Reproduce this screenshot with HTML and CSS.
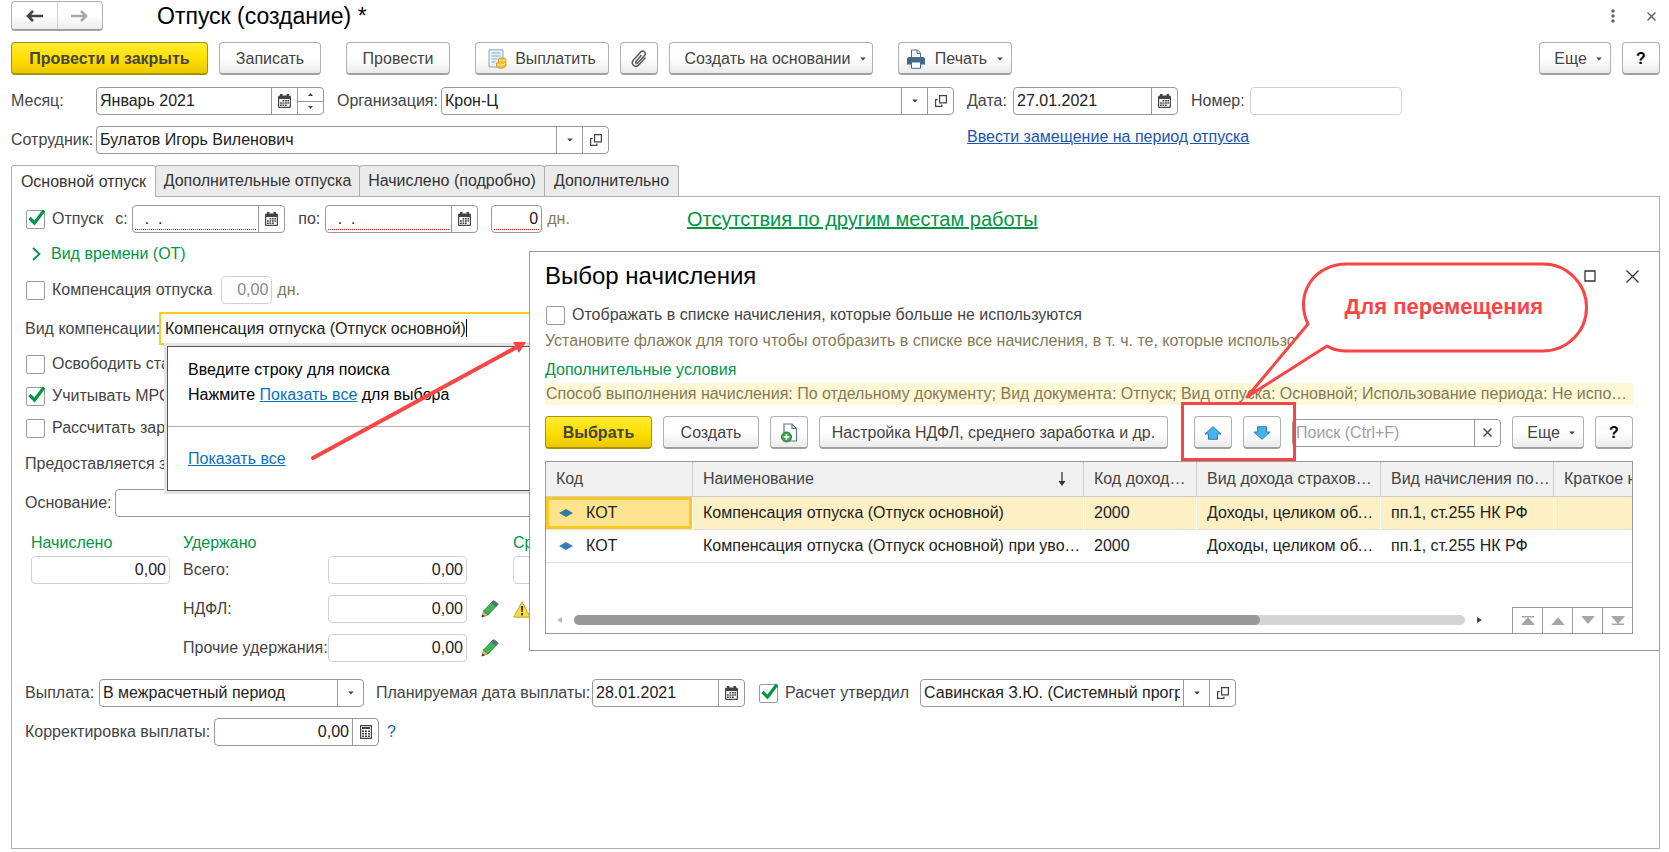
FILE: index.html
```html
<!DOCTYPE html>
<html lang="ru">
<head>
    <meta charset="UTF-8">
    <title>Отпуск (создание)</title>
    <meta name="viewport" content="width=device-width, initial-scale=1.0">
    <link rel="stylesheet" href="styles.css">
</head>
<body>

    <!-- Shared icons -->
    <svg class="sprite" aria-hidden="true">
        <symbol id="i-calendar" viewBox="0 0 13 14">
            <path fill="#444" fill-rule="evenodd" d="M1.5 1.5H2V0h2.5v1.5h4V0H11v1.5h.5A1.5 1.5 0 0 1 13 3v9.500a1.500 1.500 0 0 1-1.500 1.500h-10A1.500 1.500 0 0 1 0 12.500V3a1.500 1.500 0 0 1 1.500-1.500zM1.200 5v7.300c0 .3.200.5.500.5h9.600c.3 0 .5-.2.5-.5V5z"/>
            <path fill="#444" d="M4.500 6h1.800v1.500H4.500zM7 6h1.800v1.500H7zM9.400 6h1.600v1.500H9.400zM2 8.200h1.800v1.500H2zM4.500 8.200h1.800v1.500H4.500zM7 8.200h1.800v1.500H7zM9.400 8.200h1.600v1.500H9.400zM2 10.400h1.800v1.500H2zM4.500 10.400h1.800v1.500H4.500zM7 10.400h1.800v1.500H7z"/>
        </symbol>
        <symbol id="i-open" viewBox="0 0 12 12">
            <path fill="none" stroke="#444" stroke-width="1.200" d="M4.600.6h6.800v7.300H4.600zM2.800 4.600H.6v6.800h6.300V9.600"/>
        </symbol>
        <symbol id="i-down" viewBox="0 0 7 5">
            <path fill="#444" d="M0 .5h7L3.500 4.500z"/>
        </symbol>
        <symbol id="i-pencil" viewBox="0 0 18 18">
            <path fill="#f0b35b" stroke="#7a6b4a" stroke-width=".6" d="M1 17l1.500-6 4.500 4z"/>
            <path fill="#333" d="M.6 17.400l.9-3 2.200 1.900z"/>
            <path fill="#3fb558" stroke="#2c7f40" stroke-width=".8" d="M2.500 11l8-8.500 4.500 4-8 8.500z"/>
            <path fill="#55708c" stroke="#43586f" stroke-width=".6" d="M10.500 2.500l1.700-1.700c.6-.5 4.700 2.400 5 3.500.1.500-2.200 2.200-2.200 2.200z"/>
        </symbol>
        <symbol id="i-check" viewBox="0 0 20 20">
            <path fill="none" stroke="#009646" stroke-width="3.200" d="M3.500 9l5 5L18 1.500"/>
        </symbol>
        <symbol id="i-page-up" viewBox="0 0 12 8">
            <path fill="#a6a6a6" d="M0 8h12L6 1z"/>
        </symbol>
        <symbol id="i-page-down" viewBox="0 0 12 8">
            <path fill="#a6a6a6" d="M0 0h12L6 7z"/>
        </symbol>
    </svg>

    <header class="title-bar">
        <div class="history">
            <button type="button" aria-label="Назад"><svg width="17" height="12" viewBox="0 0 17 12"><path fill="none" stroke="#444" stroke-width="2.600" d="M17 6H3M7 1L2 6l5 5"/></svg></button>
            <button type="button" aria-label="Вперед"><svg width="17" height="12" viewBox="0 0 17 12"><path fill="none" stroke="#a8a8a8" stroke-width="2.600" d="M0 6h14M10 1l5 5-5 5"/></svg></button>
        </div>
        <h1>Отпуск (создание) *</h1>
        <div class="window-tools">
            <button type="button" class="icon-button" aria-label="Меню"><svg width="4" height="14" viewBox="0 0 4 14"><g fill="#666"><circle cx="2" cy="2" r="1.800"/><circle cx="2" cy="7" r="1.800"/><circle cx="2" cy="12" r="1.800"/></g></svg></button>
            <button type="button" class="icon-button" aria-label="Закрыть"><svg width="9" height="9" viewBox="0 0 9 9"><path stroke="#666" stroke-width="1.500" d="M.5.5l8 8M8.500.5l-8 8"/></svg></button>
        </div>
    </header>

    <div class="toolbar">
        <button type="button" class="btn btn-primary btn-post">Провести и закрыть</button>
        <button type="button" class="btn btn-save">Записать</button>
        <button type="button" class="btn btn-apply">Провести</button>
        <button type="button" class="btn btn-pay">
            <svg width="19" height="20" viewBox="0 0 19 20">
                <path fill="#e8f2fa" stroke="#8aabc4" d="M1 .8h14V18H1z"/>
                <path stroke="#8aabc4" stroke-width="1.200" d="M3.500 4h9M3.500 7h9M3.500 10h6M3.500 13h4"/>
                <path fill="#f4be3c" stroke="#c78a1b" stroke-width=".7" d="M10.500 10c1.500-1.500 6-1.500 7.500 0v7c-1.500 2.500-7.500 3-9.500.8V14c.5-.7 1.300-1 2-1.200z"/>
                <path fill="none" stroke="#fce28f" d="M11 11c2 1 4.500 1 6.500 0M9 15.500c2 1 5 1.200 8.500-1"/>
            </svg>
            Выплатить
        </button>
        <button type="button" class="btn btn-square" aria-label="Файлы">
            <svg width="16" height="18" viewBox="0 0 16 18"><path fill="none" stroke="#555" stroke-width="1.400" d="M10.500 5L5 11.500c-1 1.200.6 2.700 1.700 1.500L13.500 5.500c2.200-2.700-1.400-6-3.900-3.300L2.400 10c-3.200 3.800 1.800 8.700 5.300 5l6.800-7.500"/></svg>
        </button>
        <button type="button" class="btn btn-based">Создать на основании <svg class="caret"><use href="#i-down"/></svg></button>
        <button type="button" class="btn btn-print">
            <svg width="18" height="20" viewBox="0 0 18 20">
                <path fill="#fff" stroke="#4f6c89" d="M4.500 9V1h6l3 3v5"/>
                <path fill="none" stroke="#4f6c89" d="M10 1v3.500h3.500"/>
                <path fill="#41688f" d="M2 8h14a2 2 0 0 1 2 2v5.500H0V10a2 2 0 0 1 2-2z"/>
                <path fill="#fff" stroke="#41688f" d="M4.500 13h9v6.300h-9z"/>
            </svg>
            Печать <svg class="caret"><use href="#i-down"/></svg>
        </button>
        <button type="button" class="btn btn-more push">Еще <svg class="caret"><use href="#i-down"/></svg></button>
        <button type="button" class="btn btn-help">?</button>
    </div>

    <div class="document-head">
        <div class="head-main">
            <div class="row">
                <label class="label-head" for="month">Месяц:</label>
                <div class="field month-field">
                    <input type="text" id="month" value="Январь 2021">
                    <button type="button" aria-label="Календарь"><svg class="calendar"><use href="#i-calendar"/></svg></button>
                    <div class="spin">
                        <button type="button" aria-label="Больше"><svg width="5" height="3" viewBox="0 0 5 3"><path fill="#444" d="M0 3h5L2.500 0z"/></svg></button>
                        <button type="button" aria-label="Меньше"><svg width="5" height="3" viewBox="0 0 5 3"><path fill="#444" d="M0 0h5L2.500 3z"/></svg></button>
                    </div>
                </div>
                <label class="label-org" for="org">Организация:</label>
                <div class="field wide-field">
                    <select id="org"><option>Крон-Ц</option></select>
                    <span class="drop"><svg class="caret"><use href="#i-down"/></svg></span>
                    <button type="button" aria-label="Открыть организацию"><svg class="open"><use href="#i-open"/></svg></button>
                </div>
            </div>
            <div class="row">
                <label class="label-head" for="employee">Сотрудник:</label>
                <div class="field wide-field">
                    <select id="employee"><option>Булатов Игорь Виленович</option></select>
                    <span class="drop"><svg class="caret"><use href="#i-down"/></svg></span>
                    <button type="button" aria-label="Открыть сотрудника"><svg class="open"><use href="#i-open"/></svg></button>
                </div>
            </div>
        </div>
        <div class="head-side">
            <div class="row">
                <label class="label-date" for="date">Дата:</label>
                <div class="field date-field">
                    <input type="text" id="date" value="27.01.2021">
                    <button type="button" aria-label="Календарь"><svg class="calendar"><use href="#i-calendar"/></svg></button>
                </div>
                <label class="label-number" for="number">Номер:</label>
                <div class="field muted number-field"><input type="text" id="number"></div>
            </div>
            <a class="replace-link" href="#">Ввести замещение на период отпуска</a>
        </div>
    </div>

    <nav class="tabs">
        <button type="button" class="tab active tab-main">Основной отпуск</button>
        <button type="button" class="tab tab-extra">Дополнительные отпуска</button>
        <button type="button" class="tab tab-details">Начислено (подробно)</button>
        <button type="button" class="tab tab-other">Дополнительно</button>
    </nav>

    <main class="panel">
        <div class="row period-row">
            <label class="check"><input type="checkbox" checked><svg class="tick"><use href="#i-check"/></svg>Отпуск</label>
            <label class="label-from" for="from">с:</label>
            <div class="field period-field required">
                <input type="text" id="from" value=" .  .">
                <button type="button" aria-label="Календарь"><svg class="calendar"><use href="#i-calendar"/></svg></button>
            </div>
            <label class="label-to" for="to">по:</label>
            <div class="field period-field required">
                <input type="text" id="to" value=" .  .">
                <button type="button" aria-label="Календарь"><svg class="calendar"><use href="#i-calendar"/></svg></button>
            </div>
            <div class="field days-field required"><input type="text" class="num" value="0" aria-label="Дней отпуска"></div>
            <span class="unit">дн.</span>
            <a class="absence-link" href="#">Отсутствия по другим местам работы</a>
        </div>

        <div class="group-title">
            <svg width="9" height="14" viewBox="0 0 9 14"><path fill="none" stroke="#009646" stroke-width="1.800" d="M1 1l6.500 6L1 13"/></svg>
            Вид времени (ОТ)
        </div>

        <div class="row compensation-row">
            <label class="check"><input type="checkbox">Компенсация отпуска</label>
            <div class="field muted days-field"><input type="text" class="num" value="0,00" aria-label="Дней компенсации" disabled></div>
            <span class="unit">дн.</span>
        </div>

        <div class="row kind-row">
            <label class="label-kind" for="kind">Вид компенсации:</label>
            <div class="kind-field">
                <input type="text" id="kind" value="Компенсация отпуска (Отпуск основной)">
                <span class="text-cursor"></span>
                <div class="suggest">
                    <div class="suggest-hint">
                        <p>Введите строку для поиска</p>
                        <p>Нажмите <a href="#">Показать все</a> для выбора</p>
                    </div>
                    <div class="suggest-all"><a href="#">Показать все</a></div>
                </div>
            </div>
        </div>

        <div class="options">
            <label class="check"><input type="checkbox">Освободить ставку</label>
            <label class="check"><input type="checkbox" checked><svg class="tick"><use href="#i-check"/></svg>Учитывать МРОТ</label>
            <label class="check"><input type="checkbox">Рассчитать зарплату</label>
        </div>

        <div class="provided">Предоставляется за</div>

        <div class="row">
            <label class="label-reason" for="reason">Основание:</label>
            <div class="field reason-field"><input type="text" id="reason"></div>
        </div>

        <div class="totals-head">
            <div class="total-title">Начислено</div>
            <div class="total-title">Удержано</div>
            <div class="total-title average">Средний заработок</div>
        </div>
        <div class="totals">
            <div class="field muted"><input type="text" class="num" value="0,00" aria-label="Начислено"></div>
            <label for="held">Всего:</label>
            <div class="field muted"><input type="text" id="held" class="num" value="0,00"></div>
            <div></div>
            <div class="field muted"><input type="text" class="num" aria-label="Средний заработок"></div>

            <label class="second" for="ndfl">НДФЛ:</label>
            <div class="field muted"><input type="text" id="ndfl" class="num" value="0,00"></div>
            <button type="button" class="icon-button" aria-label="Изменить НДФЛ"><svg class="pencil"><use href="#i-pencil"/></svg></button>
            <svg class="warning" width="18" height="17" viewBox="0 0 18 17"><path fill="#f7dc3c" stroke="#b9a53a" d="M9 .8L17.300 16.200H.7z"/><path fill="#222" d="M8 5h2l-.4 6H8.400zM8 12.200h2v2H8z"/></svg>

            <label class="second" for="other">Прочие удержания:</label>
            <div class="field muted"><input type="text" id="other" class="num" value="0,00"></div>
            <button type="button" class="icon-button" aria-label="Изменить удержания"><svg class="pencil"><use href="#i-pencil"/></svg></button>
        </div>

        <div class="row pay-row">
            <label class="label-pay" for="pay">Выплата:</label>
            <div class="field pay-field">
                <select id="pay"><option>В межрасчетный период</option></select>
                <span class="drop"><svg class="caret"><use href="#i-down"/></svg></span>
            </div>
            <label class="label-plan" for="plan">Планируемая дата выплаты:</label>
            <div class="field period-field">
                <input type="text" id="plan" value="28.01.2021">
                <button type="button" aria-label="Календарь"><svg class="calendar"><use href="#i-calendar"/></svg></button>
            </div>
            <label class="check approved"><input type="checkbox" checked><svg class="tick"><use href="#i-check"/></svg>Расчет утвердил</label>
            <div class="field approver-field">
                <select aria-label="Расчет утвердил"><option>Савинская З.Ю. (Системный программист)</option></select>
                <span class="drop"><svg class="caret"><use href="#i-down"/></svg></span>
                <button type="button" aria-label="Открыть сотрудника"><svg class="open"><use href="#i-open"/></svg></button>
            </div>
        </div>

        <div class="row correction-row">
            <label class="label-correction" for="correction">Корректировка выплаты:</label>
            <div class="field correction-field">
                <input type="text" id="correction" class="num" value="0,00">
                <button type="button" aria-label="Калькулятор"><svg width="12" height="14" viewBox="0 0 12 14"><path fill="none" stroke="#444" stroke-width="1.200" d="M.6.6h10.800v12.800H.6z"/><path fill="#444" d="M2 2h8v2H2zM2 5.500h2V7H2zM5 5.500h2V7H5zM8 5.500h2V7H8zM2 8h2v1.500H2zM5 8h2v1.500H5zM8 8h2v1.500H8zM2 10.500h2V12H2zM5 10.500h2V12H5zM8 10.500h2V12H8z"/></svg></button>
            </div>
            <a class="hint-link" href="#">?</a>
        </div>

        <svg class="pointer-arrow" width="218" height="122" viewBox="0 0 218 122">
            <path stroke="#f94545" stroke-width="4" stroke-linecap="round" d="M3 117L206 6.500"/>
            <path fill="#f94545" d="M216 1l-7 11-6-11z"/>
        </svg>

        <section class="dialog">
            <div class="dialog-head">
                <h2>Выбор начисления</h2>
                <button type="button" class="icon-button" aria-label="Развернуть"><svg width="12" height="12" viewBox="0 0 12 12"><path fill="none" stroke="#333" stroke-width="1.300" d="M1 1h10v10H1z"/></svg></button>
                <button type="button" class="icon-button" aria-label="Закрыть"><svg width="13" height="13" viewBox="0 0 13 13"><path stroke="#333" stroke-width="1.300" d="M.5.500l12 12M12.500.500l-12 12"/></svg></button>
            </div>
            <label class="check"><input type="checkbox">Отображать в списке начисления, которые больше не используются</label>
            <p class="dialog-note">Установите флажок для того чтобы отобразить в списке все начисления, в т. ч. те, которые использовались</p>
            <p class="dialog-section">Дополнительные условия</p>
            <p class="conditions">Способ выполнения начисления: По отдельному документу; Вид документа: Отпуск; Вид отпуска: Основной; Использование периода: Не использовать</p>

            <div class="dialog-toolbar">
                <button type="button" class="btn btn-primary btn-choose">Выбрать</button>
                <button type="button" class="btn btn-create">Создать</button>
                <button type="button" class="btn btn-square" aria-label="Создать копированием">
                    <svg width="18" height="20" viewBox="0 0 18 20">
                        <path fill="#fff" stroke="#5f7486" stroke-width="1.200" d="M4 12V1h8l4.500 4.500V18H9"/>
                        <path fill="none" stroke="#5f7486" stroke-width="1.200" d="M12 1v4.500h4.500"/>
                        <circle cx="6.500" cy="14" r="5" fill="#3aa549" stroke="#2a7d36"/>
                        <path stroke="#fff" stroke-width="1.600" d="M6.500 11v6M3.500 14h6"/>
                    </svg>
                </button>
                <button type="button" class="btn btn-setup">Настройка НДФЛ, среднего заработка и др.</button>
                <div class="move-buttons">
                    <button type="button" class="btn btn-square" aria-label="Переместить вверх"><svg width="18" height="14" viewBox="0 0 18 14"><path fill="#46b1ea" stroke="#2b80b4" d="M9 .7L17 8h-3.500v5.300h-9V8H1z"/></svg></button>
                    <button type="button" class="btn btn-square" aria-label="Переместить вниз"><svg width="18" height="14" viewBox="0 0 18 14"><path fill="#46b1ea" stroke="#2b80b4" d="M9 13.300L17 6h-3.500V.7h-9V6H1z"/></svg></button>
                </div>
                <div class="field search-field">
                    <input type="text" placeholder="Поиск (Ctrl+F)" aria-label="Поиск">
                    <button type="button" aria-label="Очистить"><svg width="9" height="9" viewBox="0 0 9 9"><path stroke="#444" stroke-width="1.400" d="M.5.5l8 8M8.500.5l-8 8"/></svg></button>
                </div>
                <button type="button" class="btn btn-more">Еще <svg class="caret"><use href="#i-down"/></svg></button>
                <button type="button" class="btn btn-help">?</button>
            </div>

            <div class="list">
                <table>
                    <colgroup>
                        <col class="col-code"><col class="col-name"><col class="col-income"><col class="col-insurance"><col class="col-type"><col class="col-short">
                    </colgroup>
                    <thead>
                        <tr>
                            <th>Код</th>
                            <th><div class="sorted">Наименование <svg width="8" height="14" viewBox="0 0 8 14"><path stroke="#333" stroke-width="1.300" d="M4 0v11"/><path fill="#333" d="M.5 9h7L4 14z"/></svg></div></th>
                            <th>Код дохода НДФЛ</th>
                            <th>Вид дохода страховых взносов</th>
                            <th>Вид начисления по ст.255</th>
                            <th>Краткое наименование</th>
                        </tr>
                    </thead>
                    <tbody>
                        <tr class="selected">
                            <td class="current"><svg class="mark" viewBox="0 0 14 8"><path fill="#337a9e" d="M0 4l7-4 7 4-7 4z"/></svg>КОТ</td>
                            <td>Компенсация отпуска (Отпуск основной)</td>
                            <td>2000</td>
                            <td>Доходы, целиком облагаемые взносами</td>
                            <td>пп.1, ст.255 НК РФ</td>
                            <td></td>
                        </tr>
                        <tr>
                            <td><svg class="mark" viewBox="0 0 14 8"><path fill="#337db5" d="M0 4l7-4 7 4-7 4z"/></svg>КОТ</td>
                            <td>Компенсация отпуска (Отпуск основной) при увольнении</td>
                            <td>2000</td>
                            <td>Доходы, целиком облагаемые взносами</td>
                            <td>пп.1, ст.255 НК РФ</td>
                            <td></td>
                        </tr>
                    </tbody>
                </table>
                <div class="list-foot">
                    <div class="scroll">
                        <svg width="5" height="6" viewBox="0 0 5 6"><path fill="#bbb" d="M5 0v6L0 3z"/></svg>
                        <div class="scroll-track"><div class="scroll-thumb"></div></div>
                        <svg width="5" height="6" viewBox="0 0 5 6"><path fill="#444" d="M0 0v6l5-3z"/></svg>
                    </div>
                    <div class="pager">
                        <button type="button" aria-label="В начало"><svg width="14" height="9" viewBox="0 0 14 9"><path fill="#a6a6a6" d="M1 0h12v1.500H1zM0 9h14L7 1z"/></svg></button>
                        <button type="button" aria-label="Назад"><svg width="14" height="9"><use href="#i-page-up"/></svg></button>
                        <button type="button" aria-label="Вперед"><svg width="14" height="9"><use href="#i-page-down"/></svg></button>
                        <button type="button" aria-label="В конец"><svg width="14" height="9" viewBox="0 0 14 9"><path fill="#a6a6a6" d="M1 7.500h12V9H1zM0 0h14L7 8z"/></svg></button>
                    </div>
                </div>
            </div>

            <div class="callout">
                <svg width="345" height="140" viewBox="0 0 345 140">
                    <path fill="#fff" stroke="#f94545" stroke-width="3" stroke-linejoin="round" d="M103 2h196a43 43 0 0 1 0 87H103q-12 0-20-5L3 135 64 62C50 32 70 2 103 2z"/>
                </svg>
                <span>Для перемещения</span>
            </div>
        </section>
    </main>

</body>
</html>
```
FILE: styles.css
```css
* {
    box-sizing: border-box;
}

body {
    display: flex;
    flex-direction: column;
    min-height: 100vh;
    margin: 0;
    padding: 1px 9px 3px 11px;
    background: #fff;
    color: #444;
    font-family: "Liberation Sans", Arial, sans-serif;
    font-size: 16px;
    line-height: 20px;
}

button,
input,
select {
    margin: 0;
    padding: 0;
    border: 0;
    background: none;
    color: inherit;
    font: inherit;
}

h1,
h2,
p {
    margin: 0;
    font-weight: normal;
}

svg {
    flex: none;
}

.sprite {
    position: absolute;
    width: 0;
    height: 0;
}

.caret {
    width: 6px;
    height: 4px;
}

.calendar {
    width: 13px;
    height: 14px;
}

.open {
    width: 12px;
    height: 12px;
}

.pencil {
    width: 18px;
    height: 18px;
}

.icon-button {
    display: flex;
    align-items: center;
    justify-content: center;
}

/* Title bar */
.title-bar {
    display: flex;
    align-items: center;
    height: 30px;
}

.history {
    display: flex;
    width: 92px;
    height: 30px;
    border: 1px solid #b0b0b0;
    border-bottom: 2px solid #a0a0a0;
    border-radius: 4px;
    background: linear-gradient(#fff 50%, #ececec);
}

.history button {
    display: flex;
    flex: 1;
    align-items: center;
    justify-content: center;
}

.history button + button {
    border-left: 1px solid #d0d0d0;
}

.title-bar h1 {
    margin-left: 54px;
    color: #000;
    font-size: 23px;
    line-height: 30px;
}

.window-tools {
    display: flex;
    gap: 32px;
    margin-left: auto;
    padding-right: 4px;
}

/* Buttons */
.toolbar {
    display: flex;
    gap: 11px;
    margin-top: 11px;
}

.btn {
    display: flex;
    flex: none;
    align-items: center;
    justify-content: center;
    height: 33px;
    padding-top: 1px;
    border: 1px solid #b0b0b0;
    border-bottom: 2px solid #a0a0a0;
    border-radius: 4px;
    background: linear-gradient(#fff 50%, #ebebeb);
    white-space: nowrap;
}

.btn .caret {
    margin-left: 9px;
}

.btn-primary {
    border-color: #a89400;
    background: linear-gradient(#ffec3a, #ffe000 50%, #ecc900);
    font-weight: bold;
}

.btn-post { width: 197px; }
.btn-save { width: 102px; }
.btn-apply { width: 104px; margin-left: 14px; }
.btn-pay { width: 134px; gap: 8px; margin-left: 14px; }
.btn-square { width: 38px; }
.btn-based { width: 204px; padding-left: 8px; }
.btn-print { width: 114px; gap: 10px; margin-left: 14px; }
.btn-print .caret { margin-left: 0; }
.btn-more { width: 72px; padding-left: 6px; }
.btn-help { width: 38px; color: #000; font-weight: bold; }

.push {
    margin-left: auto;
}

/* Fields */
.row {
    display: flex;
    align-items: center;
    white-space: nowrap;
}

.field {
    position: relative;
    display: flex;
    flex: none;
    height: 28px;
    border: 1px solid #999;
    border-radius: 4px;
    background: #fff;
    color: #222;
}

.field input,
.field select {
    flex: 1;
    min-width: 0;
    width: 100%;
    padding: 0 3px;
    outline: 0;
    appearance: none;
}

.field button,
.drop {
    display: flex;
    flex: none;
    align-items: center;
    justify-content: center;
    width: 26px;
    border-left: 1px solid #999;
}

.drop {
    pointer-events: none;
}

.field .num {
    text-align: right;
}

.muted {
    border-color: #d2d2d2;
}

.required::after {
    content: "";
    position: absolute;
    right: 2px;
    bottom: 2px;
    left: 2px;
    border-bottom: 1px dotted #f00;
}

.period-field.required::after {
    right: 28px;
}

.period-field.required input {
    padding-left: 7px;
    white-space: pre;
}

.spin {
    display: flex;
    flex: none;
    flex-direction: column;
    width: 26px;
    border-left: 1px solid #999;
}

.spin button {
    flex: 1;
    width: 100%;
    border-left: 0;
}

.spin button + button {
    border-top: 1px solid #999;
}

.month-field { width: 228px; }
.wide-field { width: 513px; }
.date-field { width: 165px; }
.number-field { width: 152px; }
.period-field { width: 153px; }
.days-field { width: 51px; }
.reason-field { width: 513px; }
.pay-field { width: 265px; }
.approver-field { width: 316px; }
.correction-field { width: 165px; }

.label-head { width: 85px; }
.label-org { width: 117px; padding-left: 13px; }
.label-date { width: 46px; }
.label-number { width: 72px; padding-left: 13px; }
.label-from { width: 17px; }
.label-to { width: 40px; padding-left: 13px; }
.label-kind { width: 134px; }
.label-reason { width: 90px; }
.label-pay { width: 74px; }
.label-plan { width: 228px; padding-left: 12px; }
.label-correction { width: 189px; }

.check {
    position: relative;
    display: flex;
    align-items: center;
    gap: 7px;
    height: 20px;
    margin-left: 1px;
    white-space: nowrap;
}

.check input {
    flex: none;
    width: 19px;
    height: 19px;
    border: 1px solid #999;
    border-radius: 2px;
    background: #fff;
    appearance: none;
}

.tick {
    position: absolute;
    top: 0;
    left: 0;
    width: 20px;
    height: 20px;
    pointer-events: none;
}

.unit {
    margin-left: 5px;
    color: #857a55;
}

/* Document header */
.document-head {
    display: flex;
    gap: 13px;
    margin-top: 12px;
}

.head-main {
    display: flex;
    flex-direction: column;
    gap: 11px;
}

.replace-link {
    display: block;
    margin-top: 12px;
    color: #1a55b0;
}

/* Tabs */
.tabs {
    display: flex;
    margin-top: 11px;
}

.tab {
    height: 31px;
    margin-left: -1px;
    border: 1px solid #b0b0b0;
    border-bottom: 0;
    border-radius: 3px 3px 0 0;
    background: #ebebeb;
    color: #333;
    white-space: nowrap;
}

.tab.active {
    z-index: 1;
    height: 32px;
    margin: 0 0 -1px;
    background: #fff;
}

.tab-main { width: 145px; }
.tab-extra { width: 205px; }
.tab-details { width: 186px; }
.tab-other { width: 135px; }

.panel {
    position: relative;
    flex: 1;
    padding: 8px 0 0 13px;
    border: 1px solid #b0b0b0;
}

.period-row .label-from {
    margin-left: 12px;
}

.period-row .days-field {
    margin-left: 13px;
}

.absence-link {
    margin-left: 117px;
    color: #009646;
    font-size: 20px;
}

.group-title {
    display: flex;
    align-items: center;
    gap: 10px;
    margin: 11px 0 12px 7px;
    color: #009646;
}

.compensation-row .days-field {
    margin-left: 9px;
}

.compensation-row .field input {
    color: #888;
}

.kind-row {
    height: 33px;
    margin-top: 8px;
}

.kind-field {
    position: relative;
    width: 513px;
    height: 33px;
    border: 2px solid #ffcb1f;
}

.kind-field input {
    width: 100%;
    height: 29px;
    padding: 0 4px;
    outline: 0;
    color: #222;
}

.text-cursor {
    position: absolute;
    top: 5px;
    left: 305px;
    width: 1px;
    height: 18px;
    background: #000;
}

.suggest {
    position: absolute;
    z-index: 1;
    top: 32px;
    left: 6px;
    width: 520px;
    border: 1px solid #555;
    background: #fff;
    box-shadow: 0 0 0 3px #e4e4e4;
    color: #000;
}

.suggest p {
    line-height: 25px;
}

.suggest a,
.hint-link {
    color: #0a71c0;
}

.suggest-hint {
    height: 79px;
    padding: 10px 20px;
}

.suggest-all {
    height: 64px;
    padding: 22px 20px;
    border-top: 1px solid #b0b0b0;
}

.options {
    display: flex;
    flex-direction: column;
    gap: 12px;
    margin-top: 9px;
}

.provided {
    margin: 16px 0 15px;
}

.totals-head,
.totals {
    display: grid;
    grid-template-columns: 139px 132px 139px 20px 139px;
    align-items: center;
    gap: 11px 13px;
    margin-left: 6px;
    white-space: nowrap;
}

.totals-head {
    margin-top: 16px;
    margin-bottom: 3px;
}

.totals .field {
    width: 139px;
}

.total-title {
    color: #009646;
}

.average {
    grid-column: 5;
}

.second {
    grid-column: 2;
}

.pay-row {
    margin-top: 17px;
}

.approved {
    margin: 0 11px 0 14px;
}

.correction-row {
    margin-top: 11px;
}

.hint-link {
    margin-left: 8px;
    text-decoration: none;
}

/* Selection dialog */
.dialog {
    position: absolute;
    z-index: 2;
    top: 54px;
    right: -1px;
    left: 517px;
    height: 400px;
    padding: 9px 26px 0 15px;
    border: 1px solid #999;
    background: #fff;
}

.dialog-head {
    display: flex;
    align-items: center;
    gap: 30px;
    height: 30px;
}

.dialog-head h2 {
    flex: 1;
    color: #000;
    font-size: 24px;
}

.dialog-head .icon-button:last-child {
    margin-right: -6px;
}

.dialog .check {
    margin-top: 14px;
}

.dialog-note,
.conditions {
    overflow: hidden;
    color: #857a55;
    text-overflow: ellipsis;
    white-space: nowrap;
}

.dialog-note {
    margin-top: 6px;
}

.dialog-section {
    margin-top: 9px;
    color: #009646;
}

.conditions {
    margin-top: 3px;
    padding: 1px;
    background: #fff8d6;
}

.dialog-toolbar {
    display: flex;
    align-items: center;
    gap: 11px;
    margin-top: 11px;
}

.btn-choose { width: 107px; }
.btn-create { width: 96px; }
.btn-setup { width: 349px; }

.move-buttons {
    position: relative;
    display: flex;
    gap: 11px;
    margin-left: 15px;
}

.move-buttons::after {
    content: "";
    position: absolute;
    z-index: 1;
    inset: -14px -15px -12px -13px;
    border: 3px solid #f94545;
    pointer-events: none;
}

.search-field {
    flex: 1;
}

.search-field ::placeholder {
    color: #a0a0a0;
}

.list {
    display: flex;
    flex-direction: column;
    height: 173px;
    margin-top: 12px;
    overflow: hidden;
    border: 1px solid #999;
}

.list table {
    width: 1200px;
    table-layout: fixed;
    border-collapse: separate;
    border-spacing: 0;
    color: #222;
}

.col-code { width: 147px; }
.col-name { width: 391px; }
.col-income { width: 113px; }
.col-insurance { width: 184px; }
.col-type { width: 173px; }

.list th,
.list td {
    height: 33px;
    padding: 0 2px 0 10px;
    overflow: hidden;
    border-bottom: 1px solid #e0e0e0;
    font-weight: normal;
    text-align: left;
    text-overflow: ellipsis;
    white-space: nowrap;
}

.list th {
    height: 35px;
    border-right: 1px solid #ccc;
    border-bottom-color: #ccc;
    background: #f1f1f1;
    color: #444;
}

.sorted {
    display: flex;
    align-items: center;
    justify-content: space-between;
    padding-right: 15px;
}

.list .selected td {
    border-right: 1px solid #fff;
    background: #fdf0c4;
}

.list .selected .current {
    background: #fde58f;
    box-shadow: inset 0 0 0 3px #fbc91f;
}

.mark {
    width: 14px;
    height: 8px;
    margin: 0 13px 1px 3px;
}

.list-foot {
    display: flex;
    align-items: flex-end;
    margin-top: auto;
}

.scroll {
    display: flex;
    flex: 1;
    align-items: center;
    gap: 12px;
    padding: 0 30px 8px 11px;
}

.scroll-track {
    flex: 1;
    height: 10px;
    border-radius: 5px;
    background: #d4d4d4;
}

.scroll-thumb {
    width: 77%;
    height: 10px;
    border-radius: 5px;
    background: #999;
}

.pager {
    display: flex;
    border-top: 1px solid #999;
}

.pager button {
    display: flex;
    align-items: center;
    justify-content: center;
    width: 30px;
    height: 25px;
    border-left: 1px solid #999;
}

/* Annotations */
.pointer-arrow {
    position: absolute;
    z-index: 3;
    top: 144px;
    left: 298px;
}

.callout {
    position: absolute;
    z-index: 2;
    top: 10px;
    right: 70px;
    color: #f94545;
    font-size: 22px;
    font-weight: bold;
}

.callout svg {
    display: block;
}

.callout span {
    position: absolute;
    top: 35px;
    right: 46px;
    white-space: nowrap;
}
```
